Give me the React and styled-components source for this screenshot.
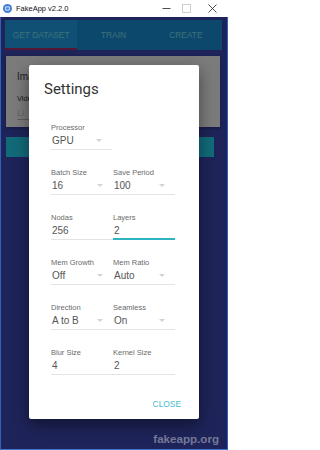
import React from "react";
import styled, { createGlobalStyle } from "styled-components";

const GlobalStyle = createGlobalStyle`
  html, body {
    margin: 0;
    padding: 0;
    background: #ffffff;
    overflow: hidden;
  }
  body {
    font-family: "Liberation Sans", Arial, sans-serif;
  }
`;

const Window = styled.div`
  position: relative;
  width: 228px;
  height: 450px;
  display: flex;
  flex-direction: column;
  box-sizing: border-box;
`;

const TitleBar = styled.div`
  height: 17px;
  flex: none;
  display: flex;
  align-items: center;
  background: #ffffff;
  font-size: 7.5px;
  color: #111;
`;

const AppIcon = styled.svg`
  margin: 0 4px 0 3px;
  flex: none;
`;

const Controls = styled.div`
  margin-left: auto;
  display: flex;
  height: 100%;
`;

const ControlButton = styled.div`
  width: ${(p) => p.$w}px;
  height: 100%;
  display: flex;
  align-items: center;
  justify-content: center;
`;

const Content = styled.div`
  position: relative;
  flex: 1;
  display: flex;
  flex-direction: column;
  padding: 3px 5px 0 4px;
  background: #3c48b2;
  border-left: 1px solid #2f62b8;
  border-right: 1px solid #2f62b8;
  border-bottom: 1px solid #3d78d0;
`;

const Tabs = styled.div`
  display: grid;
  grid-template-columns: repeat(3, 1fr);
  height: 30px;
  background: #1890d8;
`;

const Tab = styled.div`
  display: flex;
  align-items: center;
  justify-content: center;
  font-size: 8.4px;
  color: #78e0f4;
  background: ${(p) => (p.$active ? "#20a0e8" : "transparent")};
  box-shadow: ${(p) => (p.$active ? "inset 0 -2px 0 #a83068" : "none")};
`;

const Card = styled.div`
  margin: 6px 2px 0 1px;
  height: 71px;
  box-sizing: border-box;
  padding: 14px 11px 0;
  background: #f6f6f6;
  box-shadow: 0 1px 3px rgba(0, 0, 0, 0.3);
  overflow: hidden;
`;

const CardTitle = styled.div`
  font-size: 10px;
  line-height: 14px;
  color: #444;
`;

const CardLabel = styled.div`
  margin-top: 10px;
  font-size: 7.5px;
  line-height: 10px;
  color: #333;
`;

const CardInput = styled.div`
  margin-top: 3px;
  width: 60px;
  font-size: 9px;
  line-height: 12px;
  color: #c8c8c8;
  border-bottom: 1px solid #bbb;
`;

const ActionBar = styled.div`
  margin: 10px 8px 0 1px;
  height: 20px;
  background: #24d4f0;
`;

const Backdrop = styled.div`
  position: absolute;
  inset: 0;
  display: flex;
  justify-content: center;
  align-items: flex-start;
  padding-top: 48px;
  background: rgba(0, 0, 0, 0.5);
`;

const Dialog = styled.div`
  width: 170px;
  height: 354px;
  box-sizing: border-box;
  background: #ffffff;
  border-radius: 2px;
  box-shadow: 0 6px 16px rgba(0, 0, 0, 0.45);
  display: flex;
  flex-direction: column;
`;

const DialogTitle = styled.div`
  padding: 14px 0 0 15px;
  font-family: Roboto, "Liberation Sans", sans-serif;
  font-size: 15px;
  font-weight: 400;
  line-height: 20px;
  color: #333;
`;

const FieldGrid = styled.div`
  margin-top: 24px;
  padding-left: 22px;
  display: grid;
  grid-template-columns: 62px 62px;
  row-gap: 18px;
`;

const FieldBox = styled.div`
  display: flex;
  flex-direction: column;
  grid-column: ${(p) => (p.$span ? "1 / span 2" : "auto")};
  width: ${(p) => (p.$span ? "61px" : "auto")};
`;

const Label = styled.div`
  font-size: 7.5px;
  line-height: 10px;
  color: #6a6a6a;
  white-space: nowrap;
`;

const Value = styled.div`
  display: flex;
  align-items: center;
  justify-content: space-between;
  height: 14px;
  padding: 0 10px ${(p) => (p.$focused ? "1px" : "2px")} 1px;
  font-size: 10px;
  color: #555;
  border-bottom: ${(p) =>
    p.$focused ? "2px solid #2cb4c2" : "1px solid #e4e4e4"};
`;

const Arrow = styled.span`
  width: 0;
  height: 0;
  border-left: 3px solid transparent;
  border-right: 3px solid transparent;
  border-top: 3px solid #d4d4d4;
  margin-top: 1px;
`;

const Actions = styled.div`
  margin-top: 23px;
  padding-right: 18px;
  display: flex;
  justify-content: flex-end;
`;

const CloseButton = styled.div`
  font-size: 8.4px;
  line-height: 12px;
  color: #44bccb;
`;

const Watermark = styled.div`
  position: absolute;
  right: 8px;
  bottom: 4px;
  font-size: 11.6px;
  font-weight: bold;
  color: rgba(205, 205, 215, 0.5);
`;

function Field({ label, value, select, focused, span }) {
  return (
    <FieldBox $span={span}>
      <Label>{label}</Label>
      <Value $focused={focused}>
        <span>{value}</span>
        {select && <Arrow />}
      </Value>
    </FieldBox>
  );
}

const fields = [
  { label: "Processor", value: "GPU", select: true, span: true },
  { label: "Batch Size", value: "16", select: true },
  { label: "Save Period", value: "100", select: true },
  { label: "Nodas", value: "256" },
  { label: "Layers", value: "2", focused: true },
  { label: "Mem Growth", value: "Off", select: true },
  { label: "Mem Ratio", value: "Auto", select: true },
  { label: "Direction", value: "A to B", select: true },
  { label: "Seamless", value: "On", select: true },
  { label: "Blur Size", value: "4" },
  { label: "Kernel Size", value: "2" },
];

export default function App() {
  return (
    <>
      <GlobalStyle />
      <Window>
        <TitleBar>
          <AppIcon width="9" height="9" viewBox="0 0 10 10">
            <circle cx="5" cy="5" r="5" fill="#3f7fd6" />
            <path d="M3 3.2 L7 3.2 L7 6.8 L3 6.8 Z" fill="none" stroke="#dce9fb" strokeWidth="1.1" />
          </AppIcon>
          <span>FakeApp v2.2.0</span>
          <Controls>
            <ControlButton $w={20}>
              <svg width="9" height="9" viewBox="0 0 9 9">
                <line x1="0.5" y1="4.5" x2="8.5" y2="4.5" stroke="#222" strokeWidth="0.8" />
              </svg>
            </ControlButton>
            <ControlButton $w={20}>
              <svg width="9" height="9" viewBox="0 0 9 9">
                <rect x="0.5" y="0.5" width="8" height="8" fill="none" stroke="#c4c4c4" strokeWidth="0.8" />
              </svg>
            </ControlButton>
            <ControlButton $w={32}>
              <svg width="9" height="9" viewBox="0 0 9 9">
                <path d="M0.5 0.5 L8.5 8.5 M8.5 0.5 L0.5 8.5" stroke="#222" strokeWidth="0.8" />
              </svg>
            </ControlButton>
          </Controls>
        </TitleBar>
        <Content>
          <Tabs>
            <Tab $active>GET DATASET</Tab>
            <Tab>TRAIN</Tab>
            <Tab>CREATE</Tab>
          </Tabs>
          <Card>
            <CardTitle>Images</CardTitle>
            <CardLabel>Video</CardLabel>
            <CardInput>Li</CardInput>
          </Card>
          <ActionBar />
          <Backdrop>
            <Dialog>
              <DialogTitle>Settings</DialogTitle>
              <FieldGrid>
                {fields.map((f) => (
                  <Field key={f.label} {...f} />
                ))}
              </FieldGrid>
              <Actions>
                <CloseButton>CLOSE</CloseButton>
              </Actions>
            </Dialog>
          </Backdrop>
          <Watermark>fakeapp.org</Watermark>
        </Content>
      </Window>
    </>
  );
}
